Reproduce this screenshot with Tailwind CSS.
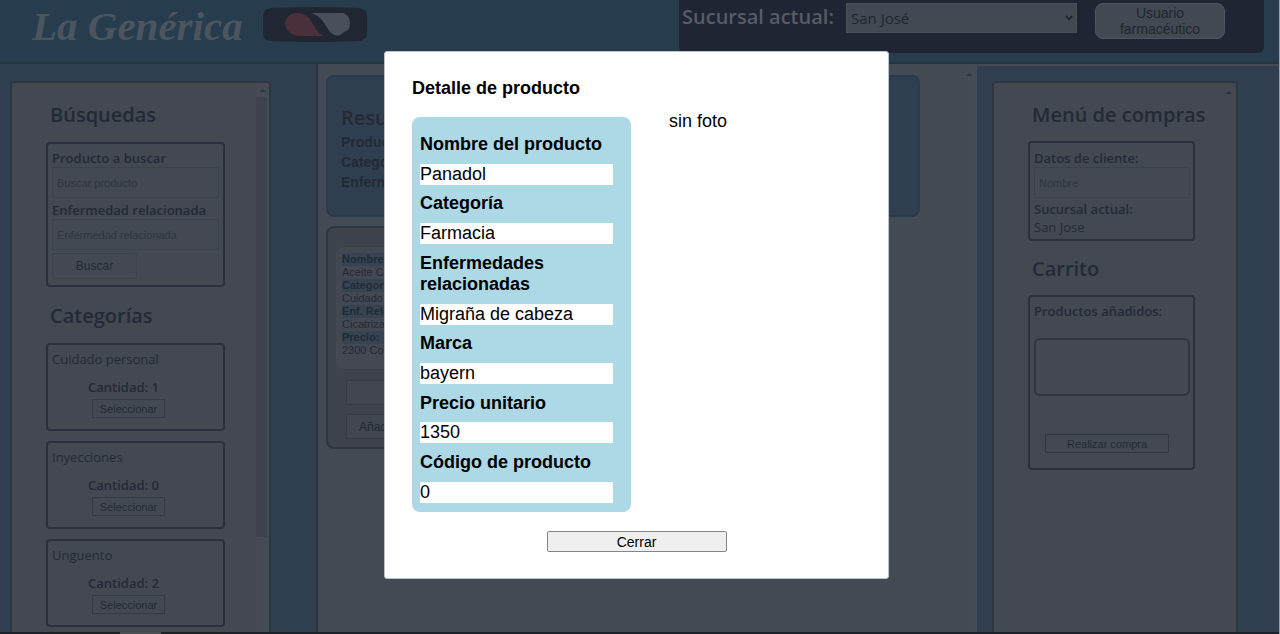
<!DOCTYPE html>
<html lang="es">
<head>
<meta charset="utf-8">
<meta name="viewport" content="width=device-width, initial-scale=1">
<title>La Genérica</title>
<script src="https://cdn.jsdelivr.net/npm/@tailwindcss/browser@4"></script>
</head>
<body class="h-screen overflow-hidden bg-[#444a53] font-['Open_Sans',sans-serif] text-[#232a36]">
<div class="flex h-full flex-col border-r border-[#9ca0a5]">
  <header class="flex h-16 shrink-0 items-start border-b-2 border-[#233442] bg-[#273c4d] pr-[15px]">
    <a href="#" class="ml-8 font-['Liberation_Serif',serif] text-[41px] leading-[52px] font-bold italic text-[#4b555f]">La Genérica</a>
    <svg class="mt-[7px] ml-5 h-[35px] w-[104px] shrink-0" viewBox="0 0 104 35" role="img" aria-label="Cápsula">
      <path d="M8 1Q52-1 96 1Q104 2 104 9V26Q104 33 96 34Q52 36 8 34Q0 33 0 26V9Q0 2 8 1Z" fill="#202732"/>
      <path d="M22 17Q23 6 35 6Q43 6 48 14L53 22Q56 27 61 29H37Q25 29 22 17Z" fill="#4a303b"/>
      <path d="M48 6H80Q87 8 87 17Q87 23 81 25L77 28Q73 30 67 25L59 13Q55 8 48 6Z" fill="#49505a"/>
    </svg>
    <div class="ml-auto flex h-[53px] w-[585px] items-start rounded-b-md bg-[#202533] pt-[3px] pl-[3px]">
      <label for="sucursal" class="w-[164px] text-[20px] leading-7 font-semibold whitespace-nowrap text-[#575c67]">Sucursal actual:</label>
      <div class="relative">
        <select id="sucursal" class="h-[30px] w-[231px] appearance-none border border-[#4b515a] bg-[#434952] pl-1 font-['Open_Sans',sans-serif] text-[15px] text-[#20262f]"><option>San José</option></select>
        <svg class="pointer-events-none absolute top-[11px] right-1 size-2" viewBox="0 0 8 8" fill="none" stroke="#1d222b" stroke-width="1.6"><path d="M1 2L4 5.500L7 2"/></svg>
      </div>
      <button type="button" class="ml-[18px] h-9 w-[130px] rounded-lg border border-[#50565f] bg-[#434952] px-4 font-['Liberation_Sans',sans-serif] text-[14px] leading-4 text-[#20262f]">Usuario farmacéutico</button>
    </div>
  </header>

  <div class="flex min-h-0 flex-1">
    <aside class="flex w-[318px] shrink-0 border-r-2 border-[#263441] bg-[#303f4f] pt-[17px] pl-[10px]">
      <div class="flex w-[261px] overflow-hidden rounded-t-sm border-2 border-b-0 border-[#2d3641] bg-[#434851]">
        <div class="min-w-0 flex-1 pl-[34px]">
          <h2 class="mt-[18px] ml-1 text-[20px] leading-7 font-semibold">Búsquedas</h2>
          <form class="mt-[13px] h-[145px] w-[179px] rounded border-2 border-[#2a313c] px-1 pt-[5px]">
            <label for="producto" class="block text-[13px] leading-[18px] font-semibold">Producto a buscar</label>
            <input id="producto" placeholder="Buscar producto" class="block h-[31px] w-full border border-[#3a424c] px-1 font-['Liberation_Sans',sans-serif] text-[11px] placeholder:text-[#2f3641]">
            <label for="enfermedad" class="mt-[3px] block text-[13px] leading-[18px] font-semibold">Enfermedad relacionada</label>
            <input id="enfermedad" placeholder="Enfermedad relacionada" class="block h-[31px] w-full border border-[#3a424c] px-1 font-['Liberation_Sans',sans-serif] text-[11px] placeholder:text-[#2f3641]">
            <button type="button" class="mt-[3px] block h-[26px] w-[85px] rounded-xs border border-[#3a424c] font-['Liberation_Sans',sans-serif] text-[12px]">Buscar</button>
          </form>
          <h2 class="mt-[15px] ml-1 text-[20px] leading-7 font-semibold">Categorías</h2>
          <ul class="mt-[13px] flex flex-col gap-[10px]">
            <li class="h-[88px] w-[179px] rounded border-2 border-[#2a313c] pt-[5px] pl-1 text-[13px] leading-[18px]">
              <p class="font-medium">Cuidado personal</p>
              <p class="mt-[10px] pl-9 font-semibold">Cantidad: 1</p>
              <button type="button" class="mt-[3px] ml-10 block h-[19px] w-[73px] border border-[#343b46] font-['Liberation_Sans',sans-serif] text-[11px] leading-4">Seleccionar</button>
            </li>
            <li class="h-[88px] w-[179px] rounded border-2 border-[#2a313c] pt-[5px] pl-1 text-[13px] leading-[18px]">
              <p class="font-medium">Inyecciones</p>
              <p class="mt-[10px] pl-9 font-semibold">Cantidad: 0</p>
              <button type="button" class="mt-[3px] ml-10 block h-[19px] w-[73px] border border-[#343b46] font-['Liberation_Sans',sans-serif] text-[11px] leading-4">Seleccionar</button>
            </li>
            <li class="h-[88px] w-[179px] rounded border-2 border-[#2a313c] pt-[5px] pl-1 text-[13px] leading-[18px]">
              <p class="font-medium">Unguento</p>
              <p class="mt-[10px] pl-9 font-semibold">Cantidad: 2</p>
              <button type="button" class="mt-[3px] ml-10 block h-[19px] w-[73px] border border-[#343b46] font-['Liberation_Sans',sans-serif] text-[11px] leading-4">Seleccionar</button>
            </li>
          </ul>
        </div>
        <div class="w-[13px] shrink-0 bg-[#454a53]">
          <svg class="h-[14px] w-full" viewBox="0 0 13 14"><path d="M3 9L6.500 6L10 9Z" fill="#30353f"/></svg>
          <div class="h-[440px] w-[11px] bg-[#3e424c]"></div>
        </div>
      </div>
    </aside>

    <main class="flex min-w-0 flex-1 bg-[#444a53]">
      <div class="min-w-0 flex-1 pt-[11px] pl-2">
        <section class="h-[142px] w-[594px] rounded-lg border-2 border-[#273c4d] bg-[#303f4f] pt-[27px] pl-[13px] font-['Liberation_Sans',sans-serif] text-[14px] leading-5 font-bold">
          <h2 class="font-['Open_Sans',sans-serif] text-[20px] leading-7 font-semibold">Resultados</h2>
          <p>Producto:</p>
          <p>Categoría:</p>
          <p>Enfermedad:</p>
        </section>
        <section class="mt-[9px] h-[223px] w-[240px] rounded-lg border-2 border-[#2d3540] bg-[#3d424b] px-2 pt-[19px] font-['Liberation_Sans',sans-serif]">
          <dl class="h-[122px] rounded-lg bg-[#434852] px-[6px] pt-[6px] text-[11px] leading-[13px]">
            <dt class="bg-[#364452] font-bold">Nombre:</dt><dd>Aceite Corporal</dd>
            <dt class="bg-[#364452] font-bold">Categoría:</dt><dd>Cuidado personal</dd>
            <dt class="bg-[#364452] font-bold">Enf. Relacionadas:</dt><dd>Cicatrizante</dd>
            <dt class="bg-[#364452] font-bold">Precio:</dt><dd>2300 Colones</dd>
          </dl>
          <button type="button" aria-label="Detalle" class="mt-[11px] ml-[10px] block h-[25px] w-[110px] rounded-xs border border-[#353c46] bg-[#41464f]"></button>
          <button type="button" class="mt-[9px] ml-[10px] block h-[25px] w-[110px] rounded-xs border border-[#353c46] bg-[#41464f] pl-3 text-left text-[12px] leading-5">Añadir</button>
        </section>
      </div>
      <div class="w-[14px] shrink-0 bg-[#454a53]">
        <svg class="mt-1 h-[14px] w-full" viewBox="0 0 14 14"><path d="M3 8L6.500 5L10 8Z" fill="#30353f"/></svg>
      </div>
    </main>

    <aside class="mt-[2px] flex w-[302px] shrink-0 bg-[#303f4f] pt-[15px] pl-[15px]">
      <div class="flex w-[246px] overflow-hidden rounded-t-sm border-2 border-b-0 border-[#2d3641] bg-[#434851]">
        <div class="min-w-0 flex-1 pl-[34px]">
          <h2 class="mt-[18px] ml-1 text-[20px] leading-7 font-semibold whitespace-nowrap">Menú de compras</h2>
          <form class="mt-3 h-[100px] w-[167px] rounded border-2 border-[#2a313c] pt-[6px] pr-[3px] pl-1 text-[13px] leading-[18px]">
            <label for="cliente" class="block font-semibold">Datos de cliente:</label>
            <input id="cliente" placeholder="Nombre" class="block h-[31px] w-full border border-[#3a424c] px-1 font-['Liberation_Sans',sans-serif] text-[11px] placeholder:text-[#2f3641]">
            <p class="mt-[2px] font-semibold">Sucursal actual:</p>
            <p class="font-medium">San Jose</p>
          </form>
          <h2 class="mt-[14px] ml-1 text-[20px] leading-7 font-semibold">Carrito</h2>
          <section class="mt-3 h-[175px] w-[167px] rounded border-2 border-[#2a313c] pt-[5px] pr-[3px] pl-1">
            <h3 class="text-[13px] leading-[18px] font-semibold whitespace-nowrap">Productos añadidos:</h3>
            <div class="mt-[18px] h-[58px] rounded-md border-2 border-[#2e3540]"></div>
            <button type="button" class="mt-[38px] ml-[11px] block h-[19px] w-[124px] rounded-xs border border-[#2f3641] font-['Liberation_Sans',sans-serif] text-[11px] leading-4">Realizar compra</button>
          </section>
        </div>
        <svg class="h-[18px] w-[13px] shrink-0" viewBox="0 0 13 18"><path d="M2 11L5.500 8L9 11Z" fill="#30353f"/></svg>
      </div>
    </aside>
  </div>
  <div class="h-[2px] shrink-0 bg-[#1d2229] pl-[120px]"><div class="h-full w-[41px] bg-[#4a4f55]"></div></div>
</div>

<div class="fixed inset-0 flex items-center justify-center pr-[7px] pb-1">
  <div role="dialog" aria-modal="true" aria-labelledby="titulo" class="w-[505px] rounded-[3px] border border-[#b8c4d0] bg-white px-[27px] pt-[26px] pb-[26px] font-['Liberation_Sans',sans-serif] text-[18px] leading-[21px] text-black">
    <h2 id="titulo" class="font-bold">Detalle de producto</h2>
    <div class="mt-[18px] flex gap-[38px]">
      <form class="flex min-h-[395px] w-[219px] flex-col justify-between rounded-lg bg-[#add8e6] pt-[17px] pr-[18px] pb-[9px] pl-2">
        <label for="f1" class="font-bold">Nombre del producto</label>
        <input id="f1" value="Panadol" class="h-[21px] w-full rounded-[1px] bg-white">
        <label for="f2" class="font-bold">Categoría</label>
        <input id="f2" value="Farmacia" class="h-[21px] w-full rounded-[1px] bg-white">
        <label for="f3" class="font-bold">Enfermedades relacionadas</label>
        <input id="f3" value="Migraña de cabeza" class="h-[21px] w-full rounded-[1px] bg-white">
        <label for="f4" class="font-bold">Marca</label>
        <input id="f4" value="bayern" class="h-[21px] w-full rounded-[1px] bg-white">
        <label for="f5" class="font-bold">Precio unitario</label>
        <input id="f5" value="1350" class="h-[21px] w-full rounded-[1px] bg-white">
        <label for="f6" class="font-bold">Código de producto</label>
        <input id="f6" value="0" class="h-[21px] w-full rounded-[1px] bg-white">
      </form>
      <p class="-mt-[6px]">sin foto</p>
    </div>
    <button type="button" class="mx-auto mt-[19px] block h-[21px] w-[180px] rounded-xs border border-[#858585] bg-[#efefef] text-[14px] leading-[18px]">Cerrar</button>
  </div>
</div>
</body>
</html>
